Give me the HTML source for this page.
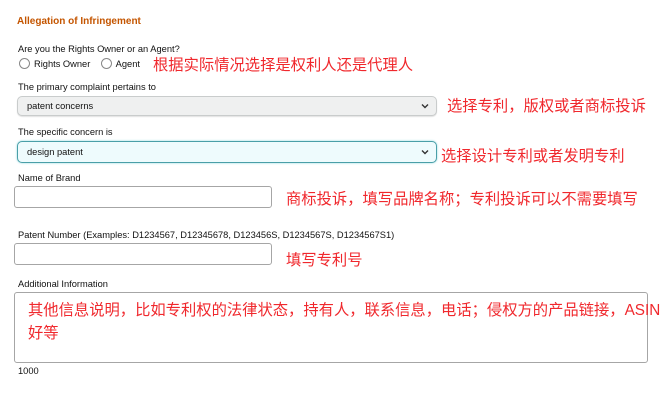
<!DOCTYPE html>
<html><head><meta charset="utf-8"><style>
body{margin:0;width:669px;height:402px;background:#fff;font-family:"Liberation Sans","Noto Sans CJK SC",sans-serif;position:relative;overflow:hidden;color:#111}
.a{position:absolute;white-space:nowrap}
.l{font-size:9.3px;color:#111}
.r{color:#f0282d;font-size:15.3px;font-family:"Liberation Sans","Noto Sans CJK SC",sans-serif}
.sel{position:absolute;left:17px;width:420px;height:20px;border:1px solid #c9cccc;border-radius:5px;background:#eff0f0;box-shadow:0 1px 1px rgba(0,0,0,.12);font-size:9.3px;line-height:19px;box-sizing:border-box;padding-left:9px}
.sel svg{position:absolute;right:7px;top:6px}
.inp{position:absolute;border:1px solid #a6a6a6;border-radius:3px;box-sizing:border-box;background:#fff}
.rad{display:inline-block;width:9px;height:9px;border:1px solid #888;border-radius:50%;vertical-align:-2px;margin-right:4px}
</style></head><body>
<div class="a" style="left:17px;top:16px;font-size:10px;font-weight:bold;color:#c45500">Allegation of Infringement</div>
<div class="a l" style="left:18px;top:44px">Are you the Rights Owner or an Agent?</div>
<div class="a l" style="left:19px;top:58px"><span class="rad"></span>Rights Owner&nbsp;&nbsp;&nbsp;&nbsp;<span class="rad"></span>Agent</div>
<div class="a r" style="left:153px;top:53px">根据实际情况选择是权利人还是代理人</div>
<div class="a l" style="left:18px;top:82px">The primary complaint pertains to</div>
<div class="sel" style="top:96px">patent concerns<svg width="8" height="6" viewBox="0 0 8 6"><path d="M1 1.5L4 4.5L7 1.5" fill="none" stroke="#333" stroke-width="1.4"/></svg></div>
<div class="a r" style="left:447px;top:94px">选择专利，版权或者商标投诉</div>
<div class="a l" style="left:18px;top:127px">The specific concern is</div>
<div class="sel" style="top:141px;height:22px;line-height:21px;background:#eefbfd;border:1px solid #4a9fa8;box-shadow:0 0 2px #8fd5dc">design patent<svg width="8" height="6" viewBox="0 0 8 6" style="top:7px"><path d="M1 1.5L4 4.5L7 1.5" fill="none" stroke="#333" stroke-width="1.4"/></svg></div>
<div class="a r" style="left:441px;top:144px">选择设计专利或者发明专利</div>
<div class="a l" style="left:18px;top:173px">Name of Brand</div>
<div class="inp" style="left:14px;top:186px;width:258px;height:22px"></div>
<div class="a r" style="left:286px;top:187px">商标投诉，填写品牌名称；专利投诉可以不需要填写</div>
<div class="a l" style="left:18px;top:230px">Patent Number (Examples: D1234567, D12345678, D123456S, D1234567S, D1234567S1)</div>
<div class="inp" style="left:14px;top:243px;width:258px;height:22px"></div>
<div class="a r" style="left:286px;top:248px">填写专利号</div>
<div class="a l" style="left:18px;top:279px">Additional Information</div>
<div class="inp" style="left:14px;top:292px;width:634px;height:71px"></div>
<div class="a r" style="left:28px;top:298px">其他信息说明，比如专利权的法律状态，持有人，联系信息，电话；侵权方的产品链接，ASIN</div>
<div class="a r" style="left:28px;top:321px">好等</div>
<div class="a l" style="left:18px;top:366px">1000</div>
</body></html>
